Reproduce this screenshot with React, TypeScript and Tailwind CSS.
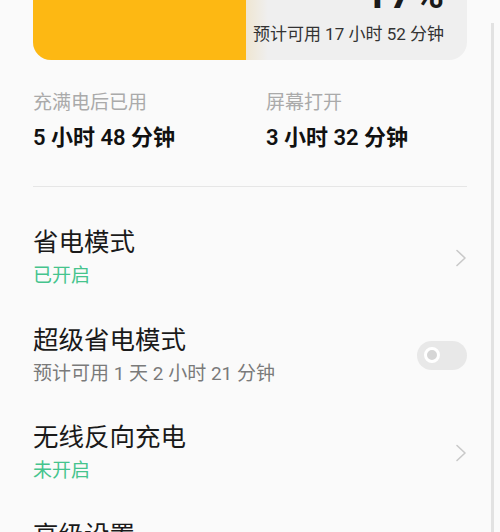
import React from "react";

const font = { fontFamily: 'Roboto, "Noto Sans CJK SC", sans-serif' };

function Chevron() {
  return (
    <svg width="12" height="18" viewBox="0 0 12 18" className="shrink-0">
      <path d="M2 1.5 L10 9 L2 16.5" fill="none" stroke="#c9c9c9" strokeWidth="1.6" strokeLinecap="round" strokeLinejoin="round" />
    </svg>
  );
}

function Toggle() {
  return (
    <div className="w-[50px] h-[29px] rounded-full bg-[#e8e8e8] flex items-center pl-[7px] shrink-0">
      <div className="w-[16px] h-[16px] rounded-full border-[3px] border-white bg-[#d6d6d6]" />
    </div>
  );
}

function Row({ title, sub, subClass, right }: { title: string; sub: string; subClass: string; right: React.ReactNode }) {
  return (
    <div className="h-[97.5px] flex items-center justify-between shrink-0">
      <div className="flex flex-col gap-[5px]">
        <div className="text-[25.5px] leading-[32px] text-[#1a1a1a] whitespace-nowrap">{title}</div>
        <div className={"text-[19px] leading-[26px] min-h-[26px] whitespace-nowrap " + subClass}>{sub}</div>
      </div>
      {right}
    </div>
  );
}

export default function App() {
  return (
    <div className="relative w-[500px] h-[532px] overflow-hidden bg-[#fafafa]" style={font}>
      <div className="flex flex-col px-[33px]">
        <div className="h-[60px] rounded-b-[18px] bg-[#efefef] flex overflow-visible">
          <div className="w-[213px] bg-[#fdb813] rounded-bl-[18px] shrink-0" />
          <div className="w-[22px] bg-gradient-to-r from-[#efe6d2] to-[#efefef] shrink-0" />
          <div className="flex-1 flex flex-col items-end justify-end pr-[23px] pb-[14.5px] min-w-0">
            <div className="text-[40px] leading-[40px] font-bold text-[#1a1a1a] tracking-[2px] mr-[-2px] whitespace-nowrap">17%</div>
            <div className="mt-[7px] text-[17px] leading-[24px] text-[#333333] whitespace-nowrap">预计可用 17 小时 52 分钟</div>
          </div>
        </div>

        <div className="flex mt-[30px]">
          <div className="w-[233px] flex flex-col gap-[7px]">
            <div className="text-[19px] leading-[26px] text-[#aaaaaa]">充满电后已用</div>
            <div className="text-[22px] leading-[30px] font-semibold text-[#111111] whitespace-nowrap">5 小时 48 分钟</div>
          </div>
          <div className="flex flex-col gap-[7px]">
            <div className="text-[19px] leading-[26px] text-[#aaaaaa]">屏幕打开</div>
            <div className="text-[22px] leading-[30px] font-semibold text-[#111111] whitespace-nowrap">3 小时 32 分钟</div>
          </div>
        </div>

        <div className="mt-[33px] h-px bg-[#e6e6e6]" />

        <div className="mt-[22px] flex flex-col">
          <Row title="省电模式" sub="已开启" subClass="text-[#45c48d]" right={<Chevron />} />
          <Row title="超级省电模式" sub="预计可用 1 天 2 小时 21 分钟" subClass="text-[#7a7a7a]" right={<Toggle />} />
          <Row title="无线反向充电" sub="未开启" subClass="text-[#45c48d]" right={<Chevron />} />
          <Row title="高级设置" sub="" subClass="text-[#7a7a7a]" right={<Chevron />} />
        </div>
      </div>
      <div className="absolute right-[6px] top-[23px] bottom-0 w-[3px] bg-[#e2e2e2]" />
    </div>
  );
}
